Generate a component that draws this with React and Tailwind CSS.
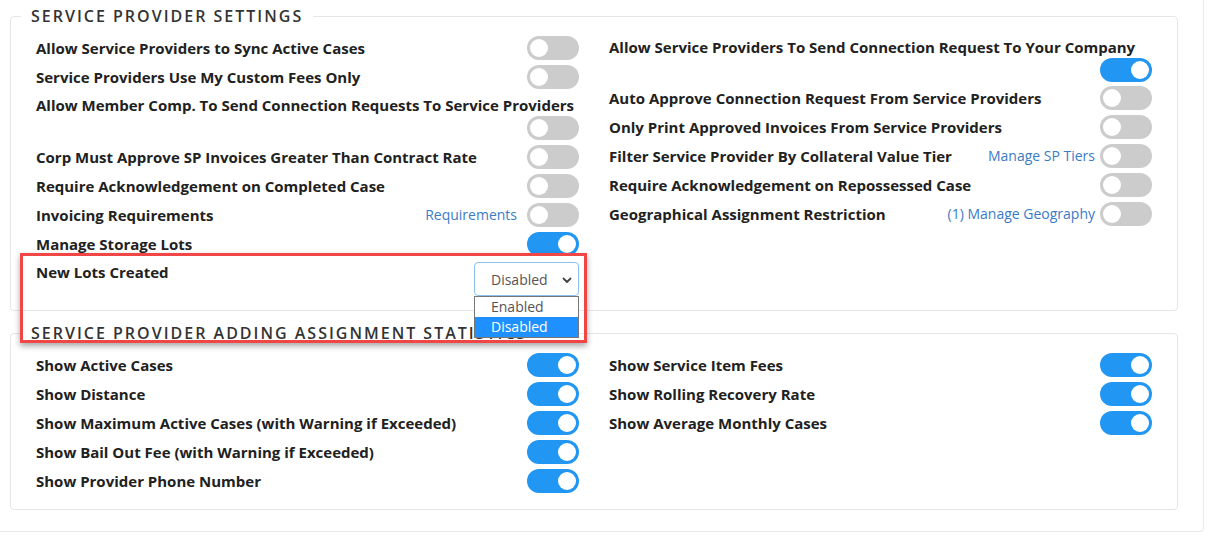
import React from "react";

function Toggle({ on }) {
  return (
    <div
      className={`relative h-[24px] w-[52px] shrink-0 rounded-full ${on ? "bg-[#2196f3]" : "bg-[#cccccc]"}`}
    >
      <div
        className={`absolute top-[3px] h-[18px] w-[18px] rounded-full bg-white ${on ? "left-[31px]" : "left-[3px]"}`}
      />
    </div>
  );
}

function Row({ label, on, link, linkGap = "mr-[5px]" }) {
  return (
    <div className="flex h-[29px] items-center justify-between">
      <span className="text-[15px] font-bold leading-[22px] text-[#212121]">{label}</span>
      <div className="flex items-center">
        {link && <span className={`${linkGap} text-[14px] leading-[22px] text-[#3b7bc6]`}>{link}</span>}
        <Toggle on={on} />
      </div>
    </div>
  );
}

function WrapRow({ label, on, h }) {
  return (
    <div className={`flex flex-col pt-[3px] ${h}`}>
      <span className="text-[15px] font-bold leading-[22px] text-[#212121]">{label}</span>
      <div className="flex justify-end">
        <Toggle on={on} />
      </div>
    </div>
  );
}

function Legend({ children }) {
  return (
    <legend className="ml-[-15px] px-[10px] text-[16px] font-semibold uppercase leading-[22px] tracking-[2px] text-[#333333]">
      {children}
    </legend>
  );
}

export default function App() {
  return (
    <div
      className="relative h-[540px] w-[1217px] overflow-hidden bg-white"
      style={{ fontFamily: "'Open Sans', 'Noto Sans', sans-serif" }}
    >
      <div className="h-[532px] w-[1204px] rounded-br-[4px] border-r border-b border-[#e9e9e9] pt-[5px]">
        <fieldset className="ml-[10px] w-[1168px] rounded-[4px] border border-[#e6e6e6] pt-[6px] pr-[25px] pb-[14px] pl-[25px]">
          <Legend>Service Provider Settings</Legend>
          <div className="grid grid-cols-2 gap-x-[30px]">
            <div className="flex flex-col">
              <Row label="Allow Service Providers to Sync Active Cases" on={false} />
              <Row label="Service Providers Use My Custom Fees Only" on={false} />
              <WrapRow label="Allow Member Comp. To Send Connection Requests To Service Providers" on={false} h="h-[51px]" />
              <Row label="Corp Must Approve SP Invoices Greater Than Contract Rate" on={false} />
              <Row label="Require Acknowledgement on Completed Case" on={false} />
              <Row label="Invoicing Requirements" on={false} link="Requirements" linkGap="mr-[10px]" />
              <Row label="Manage Storage Lots" on={true} />
              <div className="flex items-start justify-between pt-[3px]">
                <span className="text-[15px] font-bold leading-[22px] text-[#212121]">New Lots Created</span>
                <div className="relative mt-[1px]">
                  <div className="flex h-[34px] w-[105px] items-center justify-between rounded-[4px] border border-[#8ec2ee] bg-white pr-[6px] pl-[16px] text-[14px] text-[#555555]">
                    <span>Disabled</span>
                    <svg width="10" height="10" viewBox="0 0 10 10" className="mt-[1px]">
                      <path d="M1.5 3.5 L5 7 L8.5 3.5" fill="none" stroke="#444" strokeWidth="1.8" strokeLinecap="round" strokeLinejoin="round" />
                    </svg>
                  </div>
                  <div className="absolute top-[34px] left-0 z-20 w-[105px] border border-[#767676] bg-white text-[14px] leading-[19px]">
                    <div className="h-[20px] pl-[16px] text-[#555555]">Enabled</div>
                    <div className="h-[20px] bg-[#1e90ff] pl-[16px] text-white">Disabled</div>
                  </div>
                </div>
              </div>
            </div>
            <div className="flex flex-col">
              <WrapRow label="Allow Service Providers To Send Connection Request To Your Company" on={true} h="h-[50px]" />
              <Row label="Auto Approve Connection Request From Service Providers" on={false} />
              <Row label="Only Print Approved Invoices From Service Providers" on={false} />
              <Row label="Filter Service Provider By Collateral Value Tier" on={false} link="Manage SP Tiers" />
              <Row label="Require Acknowledgement on Repossessed Case" on={false} />
              <Row label="Geographical Assignment Restriction" on={false} link="(1) Manage Geography" />
            </div>
          </div>
        </fieldset>

        <fieldset className="mt-[11px] ml-[10px] w-[1168px] rounded-[4px] border border-[#e6e6e6] pt-[6px] pr-[25px] pb-[14px] pl-[25px]">
          <Legend>Service Provider Adding Assignment Statistics</Legend>
          <div className="grid grid-cols-2 gap-x-[30px]">
            <div className="flex flex-col">
              <Row label="Show Active Cases" on={true} />
              <Row label="Show Distance" on={true} />
              <Row label="Show Maximum Active Cases (with Warning if Exceeded)" on={true} />
              <Row label="Show Bail Out Fee (with Warning if Exceeded)" on={true} />
              <Row label="Show Provider Phone Number" on={true} />
            </div>
            <div className="flex flex-col">
              <Row label="Show Service Item Fees" on={true} />
              <Row label="Show Rolling Recovery Rate" on={true} />
              <Row label="Show Average Monthly Cases" on={true} />
            </div>
          </div>
        </fieldset>
      </div>

      <div className="pointer-events-none absolute top-[253px] left-[20px] z-30 h-[90px] w-[567px] border-[3px] border-[#f04646] shadow-[0_3px_6px_rgba(0,0,0,0.35)]" />
    </div>
  );
}
